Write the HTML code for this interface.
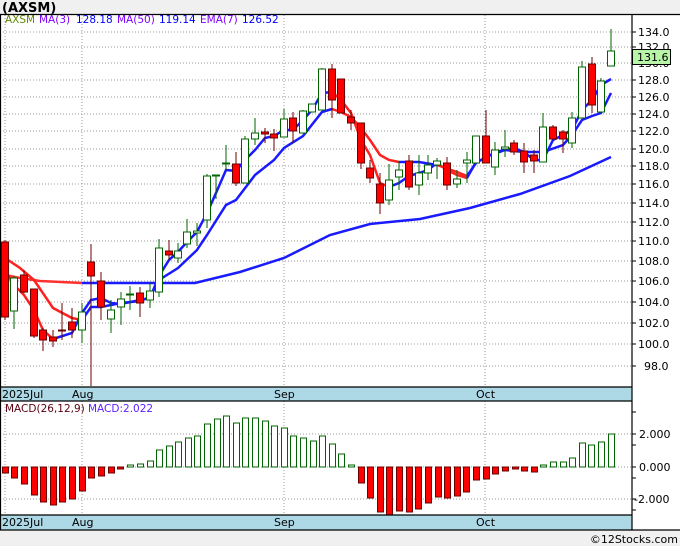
<!DOCTYPE html>
<html><head><meta charset="utf-8"><style>
html,body{margin:0;padding:0;background:#f0f0f0;}
svg{display:block;font-family:"DejaVu Sans","Liberation Sans",sans-serif;}
</style></head><body>
<svg width="680" height="546" viewBox="0 0 680 546" xmlns="http://www.w3.org/2000/svg">
<rect x="0" y="0" width="680" height="546" fill="#f0f0f0"/>
<text x="2" y="12" font-size="13" font-weight="bold" fill="#000">(AXSM)</text>
<rect x="0" y="14" width="680" height="516" fill="#fff"/>
<!-- grids price -->
<g stroke="#999" stroke-dasharray="1,2" stroke-width="1">
<line x1="0" x2="632" y1="32" y2="32"/><line x1="0" x2="632" y1="47" y2="47"/><line x1="0" x2="632" y1="63" y2="63"/><line x1="0" x2="632" y1="80" y2="80"/><line x1="0" x2="632" y1="97" y2="97"/><line x1="0" x2="632" y1="114" y2="114"/><line x1="0" x2="632" y1="131" y2="131"/><line x1="0" x2="632" y1="149" y2="149"/><line x1="0" x2="632" y1="166" y2="166"/><line x1="0" x2="632" y1="184" y2="184"/><line x1="0" x2="632" y1="203" y2="203"/><line x1="0" x2="632" y1="222" y2="222"/><line x1="0" x2="632" y1="241" y2="241"/><line x1="0" x2="632" y1="261" y2="261"/><line x1="0" x2="632" y1="281" y2="281"/><line x1="0" x2="632" y1="302" y2="302"/><line x1="0" x2="632" y1="323" y2="323"/><line x1="0" x2="632" y1="344" y2="344"/><line x1="0" x2="632" y1="366" y2="366"/>
<line x1="5" x2="5" y1="15" y2="387"/><line x1="82" x2="82" y1="15" y2="387"/><line x1="284" x2="284" y1="15" y2="387"/><line x1="485" x2="485" y1="15" y2="387"/>
<line x1="0" x2="632" y1="434" y2="434"/><line x1="0" x2="632" y1="467" y2="467"/><line x1="0" x2="632" y1="499" y2="499"/>
<line x1="5" x2="5" y1="401" y2="515"/><line x1="82" x2="82" y1="401" y2="515"/><line x1="284" x2="284" y1="401" y2="515"/><line x1="485" x2="485" y1="401" y2="515"/>
</g>
<!-- MA50 -->
<polyline fill="none" stroke="#ff3030" stroke-width="2.5" points="5,275 20,278 40,281 82,283"/>
<polyline fill="none" stroke="#1a1aff" stroke-width="2.5" points="82,283 195,283 240,272 284,258 330,235 370,224 420,219 470,208 520,194 570,176 611,157"/>
<!-- EMA7 -->
<polyline fill="none" stroke="#ff2020" stroke-width="2.5" points="5,258 20,268 34,280 53,308 72,318 82,320"/>
<polyline fill="none" stroke="#1a1aff" stroke-width="2.5" points="82,320 91,307 101,307 121,303 140,301 150,297 159,280 178,268 197,250 207,235 226,205 236,200 255,175 274,160 284,148 303,136 322,112 332,109"/>
<polyline fill="none" stroke="#ff2020" stroke-width="2.5" points="332,109 341,112 351,117 361,128 370,140 380,155 389,160 399,162"/>
<polyline fill="none" stroke="#1a1aff" stroke-width="2.5" points="399,162 419,162 437,165"/>
<polyline fill="none" stroke="#ff2020" stroke-width="2.5" points="437,165 457,172 467,176"/>
<polyline fill="none" stroke="#1a1aff" stroke-width="2.5" points="467,176 476,163 486,157 505,150 524,152 543,152 563,145 572,135 582,120 592,116 601,113 611,93"/>
<!-- MA3 -->
<polyline fill="none" stroke="#ff2020" stroke-width="2.5" points="5,270 14,285 24,295 34,310 43,330 53,339"/>
<polyline fill="none" stroke="#1a1aff" stroke-width="2.5" points="53,339 72,333 82,313 91,300 101,298 111,303 121,304 140,300 150,298 159,276 169,260 178,252 187,242 197,232 207,213 216,193 226,170 236,171 245,160 255,150 265,138 274,136 284,130 293,130 303,120 312,110 322,93 332,92"/>
<polyline fill="none" stroke="#ff2020" stroke-width="2.5" points="332,92 341,100 351,113 361,140 370,155 380,183 389,187"/>
<polyline fill="none" stroke="#1a1aff" stroke-width="2.5" points="389,187 399,183 409,176 419,173 428,170 437,163"/>
<polyline fill="none" stroke="#ff2020" stroke-width="2.5" points="437,163 447,170 457,175 467,178"/>
<polyline fill="none" stroke="#1a1aff" stroke-width="2.5" points="467,178 476,162 486,158 495,152 505,150 514,148 524,152 534,160 543,160 553,140 563,135 572,130 582,110 592,100 601,85 611,79"/>
<!-- candles -->
<g stroke-width="1">
<g stroke="#6b0000"><line x1="5" x2="5" y1="240" y2="320"/><line x1="24" x2="24" y1="270" y2="293"/><line x1="34" x2="34" y1="289" y2="338"/><line x1="43" x2="43" y1="328" y2="351"/><line x1="53" x2="53" y1="330" y2="347"/><line x1="62" x2="62" y1="303" y2="340"/><line x1="72" x2="72" y1="308" y2="338"/><line x1="91" x2="91" y1="244" y2="386"/><line x1="101" x2="101" y1="272" y2="320"/><line x1="140" x2="140" y1="287" y2="317"/><line x1="169" x2="169" y1="240" y2="260"/><line x1="236" x2="236" y1="152" y2="186"/><line x1="265" x2="265" y1="128" y2="143"/><line x1="274" x2="274" y1="129" y2="151"/><line x1="293" x2="293" y1="112" y2="143"/><line x1="332" x2="332" y1="64" y2="118"/><line x1="341" x2="341" y1="79" y2="113"/><line x1="351" x2="351" y1="110" y2="130"/><line x1="361" x2="361" y1="123" y2="169"/><line x1="370" x2="370" y1="160" y2="183"/><line x1="380" x2="380" y1="173" y2="214"/><line x1="409" x2="409" y1="155" y2="190"/><line x1="447" x2="447" y1="157" y2="190"/><line x1="486" x2="486" y1="110" y2="163"/><line x1="514" x2="514" y1="140" y2="155"/><line x1="524" x2="524" y1="143" y2="173"/><line x1="534" x2="534" y1="150" y2="173"/><line x1="553" x2="553" y1="125" y2="140"/><line x1="563" x2="563" y1="130" y2="153"/><line x1="592" x2="592" y1="57" y2="113"/></g>
<g stroke="#006400"><line x1="14" x2="14" y1="276" y2="329"/><line x1="82" x2="82" y1="303" y2="343"/><line x1="111" x2="111" y1="300" y2="333"/><line x1="121" x2="121" y1="292" y2="325"/><line x1="130" x2="130" y1="286" y2="310"/><line x1="150" x2="150" y1="283" y2="308"/><line x1="159" x2="159" y1="239" y2="297"/><line x1="178" x2="178" y1="243" y2="263"/><line x1="187" x2="187" y1="219" y2="248"/><line x1="197" x2="197" y1="223" y2="246"/><line x1="207" x2="207" y1="174" y2="228"/><line x1="216" x2="216" y1="175" y2="199"/><line x1="226" x2="226" y1="145" y2="170"/><line x1="245" x2="245" y1="136" y2="183"/><line x1="255" x2="255" y1="118" y2="145"/><line x1="284" x2="284" y1="109" y2="137"/><line x1="303" x2="303" y1="110" y2="133"/><line x1="322" x2="322" y1="68" y2="110"/><line x1="389" x2="389" y1="164" y2="205"/><line x1="399" x2="399" y1="161" y2="190"/><line x1="419" x2="419" y1="155" y2="195"/><line x1="428" x2="428" y1="155" y2="180"/><line x1="437" x2="437" y1="158" y2="179"/><line x1="457" x2="457" y1="170" y2="188"/><line x1="467" x2="467" y1="152" y2="183"/><line x1="495" x2="495" y1="142" y2="175"/><line x1="505" x2="505" y1="130" y2="157"/><line x1="543" x2="543" y1="113" y2="162"/><line x1="572" x2="572" y1="112" y2="148"/><line x1="582" x2="582" y1="61" y2="118"/><line x1="601" x2="601" y1="78" y2="112"/><line x1="611" x2="611" y1="29" y2="66"/></g>
<g fill="#ff0000" stroke="#6b0000">
<rect x="1.5" y="242" width="7" height="75"/><rect x="20.5" y="275" width="7" height="17"/><rect x="30.5" y="289" width="7" height="47"/><rect x="39.5" y="330" width="7" height="10"/><rect x="49.5" y="337" width="7" height="4"/><rect x="58.5" y="330" width="7" height="1"/><rect x="68.5" y="322" width="7" height="8"/><rect x="87.5" y="262" width="7" height="14"/><rect x="97.5" y="281" width="7" height="26"/><rect x="136.5" y="293" width="7" height="10"/><rect x="165.5" y="251" width="7" height="4"/><rect x="232.5" y="164" width="7" height="19"/><rect x="261.5" y="132" width="7" height="2"/><rect x="270.5" y="134" width="7" height="4"/><rect x="289.5" y="118" width="7" height="13"/><rect x="328.5" y="69" width="7" height="31"/><rect x="337.5" y="79" width="7" height="34"/><rect x="347.5" y="117" width="7" height="6"/><rect x="357.5" y="123" width="7" height="40"/><rect x="366.5" y="168" width="7" height="10"/><rect x="376.5" y="184" width="7" height="19"/><rect x="405.5" y="161" width="7" height="26"/><rect x="443.5" y="163" width="7" height="22"/><rect x="482.5" y="136" width="7" height="27"/><rect x="510.5" y="143" width="7" height="9"/><rect x="520.5" y="151" width="7" height="11"/><rect x="530.5" y="155" width="7" height="6"/><rect x="549.5" y="127" width="7" height="12"/><rect x="559.5" y="132" width="7" height="7"/><rect x="588.5" y="64" width="7" height="41"/>
</g>
<g fill="#fff" stroke="#006400">
<rect x="10.5" y="278" width="7" height="33"/><rect x="78.5" y="312" width="7" height="18"/><rect x="107.5" y="310" width="7" height="9"/><rect x="117.5" y="299" width="7" height="8"/><rect x="126.5" y="294" width="7" height="1"/><rect x="146.5" y="291" width="7" height="9"/><rect x="155.5" y="248" width="7" height="44"/><rect x="174.5" y="251" width="7" height="7"/><rect x="183.5" y="232" width="7" height="12"/><rect x="193.5" y="231" width="7" height="2"/><rect x="203.5" y="176" width="7" height="44"/><rect x="212.5" y="175" width="7" height="1"/><rect x="222.5" y="163" width="7" height="1"/><rect x="241.5" y="139" width="7" height="44"/><rect x="251.5" y="133" width="7" height="6"/><rect x="280.5" y="119" width="7" height="18"/><rect x="299.5" y="111" width="7" height="22"/><rect x="308.5" y="104" width="7" height="8"/><rect x="318.5" y="69" width="7" height="41"/><rect x="385.5" y="180" width="7" height="20"/><rect x="395.5" y="170" width="7" height="7"/><rect x="415.5" y="173" width="7" height="12"/><rect x="424.5" y="165" width="7" height="8"/><rect x="433.5" y="161" width="7" height="4"/><rect x="453.5" y="179" width="7" height="5"/><rect x="463.5" y="160" width="7" height="3"/><rect x="472.5" y="136" width="7" height="27"/><rect x="491.5" y="150" width="7" height="17"/><rect x="501.5" y="147" width="7" height="2"/><rect x="539.5" y="127" width="7" height="35"/><rect x="568.5" y="118" width="7" height="25"/><rect x="578.5" y="67" width="7" height="51"/><rect x="597.5" y="81" width="7" height="31"/><rect x="607.5" y="51" width="7" height="15"/>
</g></g>
<!-- legend -->
<text y="23" font-size="10.5"><tspan x="5" fill="#5f8a00">AXSM</tspan><tspan x="39" fill="#8000ff">MA(3)</tspan><tspan x="76" fill="#0000ff">128.18</tspan><tspan x="117" fill="#8000ff">MA(50)</tspan><tspan x="159" fill="#0000ff">119.14</tspan><tspan x="200" fill="#8000ff">EMA(7)</tspan><tspan x="242" fill="#0000ff">126.52</tspan></text>
<!-- MACD bars -->
<g fill="#ff0000" stroke="#6b0000">
<rect x="2.5" y="467" width="6" height="6"/><rect x="11.5" y="467" width="6" height="11"/><rect x="21.5" y="467" width="6" height="17"/><rect x="31.5" y="467" width="6" height="28"/><rect x="40.5" y="467" width="6" height="35"/><rect x="50.5" y="467" width="6" height="38"/><rect x="59.5" y="467" width="6" height="35"/><rect x="69.5" y="467" width="6" height="32"/><rect x="79.5" y="467" width="6" height="24"/><rect x="88.5" y="467" width="6" height="11"/><rect x="98.5" y="467" width="6" height="9"/><rect x="108.5" y="467" width="6" height="6"/><rect x="117.5" y="467" width="6" height="2"/>
<rect x="358.5" y="467" width="6" height="16"/><rect x="367.5" y="467" width="6" height="31"/><rect x="377.5" y="467" width="6" height="45"/><rect x="386.5" y="467" width="6" height="48"/><rect x="396.5" y="467" width="6" height="44"/><rect x="406.5" y="467" width="6" height="45"/><rect x="415.5" y="467" width="6" height="42"/><rect x="425.5" y="467" width="6" height="36"/><rect x="435.5" y="467" width="6" height="30"/><rect x="444.5" y="467" width="6" height="31"/><rect x="454.5" y="467" width="6" height="29"/><rect x="463.5" y="467" width="6" height="25"/><rect x="473.5" y="467" width="6" height="13"/><rect x="483.5" y="467" width="6" height="12"/><rect x="492.5" y="467" width="6" height="7"/><rect x="502.5" y="467" width="6" height="4"/><rect x="512.5" y="467" width="6" height="2"/><rect x="521.5" y="467" width="6" height="4"/><rect x="531.5" y="467" width="6" height="5"/>
</g>
<g fill="#fff" stroke="#006400">
<rect x="127.5" y="465" width="6" height="2"/><rect x="137.5" y="464" width="6" height="3"/><rect x="147.5" y="461" width="6" height="6"/><rect x="156.5" y="450" width="6" height="17"/><rect x="166.5" y="446" width="6" height="21"/><rect x="175.5" y="442" width="6" height="25"/><rect x="185.5" y="438" width="6" height="29"/><rect x="194.5" y="436" width="6" height="31"/><rect x="204.5" y="424" width="6" height="43"/><rect x="214.5" y="419" width="6" height="48"/><rect x="223.5" y="416" width="6" height="51"/><rect x="233.5" y="423" width="6" height="44"/><rect x="242.5" y="418" width="6" height="49"/><rect x="252.5" y="418" width="6" height="49"/><rect x="262.5" y="421" width="6" height="46"/><rect x="271.5" y="426" width="6" height="41"/><rect x="281.5" y="428" width="6" height="39"/><rect x="290.5" y="436" width="6" height="31"/><rect x="300.5" y="438" width="6" height="29"/><rect x="310.5" y="441" width="6" height="26"/><rect x="319.5" y="436" width="6" height="31"/><rect x="329.5" y="444" width="6" height="23"/><rect x="338.5" y="454" width="6" height="13"/><rect x="348.5" y="465" width="6" height="2"/>
<rect x="540.5" y="465" width="6" height="2"/><rect x="550.5" y="462" width="6" height="5"/><rect x="560.5" y="462" width="6" height="5"/><rect x="569.5" y="458" width="6" height="9"/><rect x="579.5" y="443" width="6" height="24"/><rect x="588.5" y="445" width="6" height="22"/><rect x="598.5" y="442" width="6" height="25"/><rect x="608.5" y="434" width="6" height="33"/>
</g>
<text y="412" font-size="10.5"><tspan x="5" fill="#5a0010">MACD(26,12,9)</tspan><tspan x="88" fill="#6020ff">MACD:2.022</tspan></text>
<!-- date bands -->
<rect x="0" y="387" width="632" height="14" fill="#add8e6"/>
<rect x="0" y="515" width="632" height="15" fill="#add8e6"/>
<g stroke="#000" stroke-width="1.2">
<line x1="0" x2="632" y1="387" y2="387"/><line x1="0" x2="632" y1="401" y2="401"/><line x1="0" x2="632" y1="515" y2="515"/><line x1="0" x2="680" y1="530" y2="530"/><line x1="0" x2="680" y1="14.5" y2="14.5"/>
<line x1="632" x2="632" y1="14" y2="530"/><line x1="0.5" x2="0.5" y1="14" y2="530"/>
</g>
<g font-size="11" fill="#000">
<text x="2" y="398">2025Jul</text><text x="72" y="398">Aug</text><text x="274" y="398">Sep</text><text x="476" y="398">Oct</text>
<text x="2" y="526">2025Jul</text><text x="72" y="526">Aug</text><text x="274" y="526">Sep</text><text x="476" y="526">Oct</text>
</g>
<!-- price axis -->
<g stroke="#000"><line x1="632" x2="636" y1="32" y2="32"/><line x1="632" x2="636" y1="47" y2="47"/><line x1="632" x2="636" y1="80" y2="80"/><line x1="632" x2="636" y1="97" y2="97"/><line x1="632" x2="636" y1="114" y2="114"/><line x1="632" x2="636" y1="131" y2="131"/><line x1="632" x2="636" y1="149" y2="149"/><line x1="632" x2="636" y1="166" y2="166"/><line x1="632" x2="636" y1="184" y2="184"/><line x1="632" x2="636" y1="203" y2="203"/><line x1="632" x2="636" y1="222" y2="222"/><line x1="632" x2="636" y1="241" y2="241"/><line x1="632" x2="636" y1="261" y2="261"/><line x1="632" x2="636" y1="281" y2="281"/><line x1="632" x2="636" y1="302" y2="302"/><line x1="632" x2="636" y1="323" y2="323"/><line x1="632" x2="636" y1="344" y2="344"/><line x1="632" x2="636" y1="366" y2="366"/>
<line x1="632" x2="636" y1="412" y2="412"/><line x1="632" x2="636" y1="434" y2="434"/><line x1="632" x2="636" y1="445" y2="445"/><line x1="632" x2="636" y1="467" y2="467"/><line x1="632" x2="636" y1="478" y2="478"/><line x1="632" x2="636" y1="499" y2="499"/><line x1="632" x2="636" y1="510" y2="510"/></g>
<g font-size="11" fill="#000">
<text x="638" y="36">134.0</text><text x="638" y="51">132.0</text><text x="638" y="67">130.0</text><text x="638" y="84">128.0</text><text x="638" y="101">126.0</text><text x="638" y="118">124.0</text><text x="638" y="135">122.0</text><text x="638" y="153">120.0</text><text x="638" y="170">118.0</text><text x="638" y="188">116.0</text><text x="638" y="207">114.0</text><text x="638" y="226">112.0</text><text x="638" y="245">110.0</text><text x="638" y="265">108.0</text><text x="638" y="285">106.0</text><text x="638" y="306">104.0</text><text x="638" y="327">102.0</text><text x="638" y="348">100.0</text><text x="644" y="370">98.0</text>
<text x="639" y="438">2.000</text><text x="639" y="471">0.000</text><text x="634" y="503">-2.000</text>
</g>
<rect x="632.5" y="49.5" width="38" height="15" fill="#b8f5a8" stroke="#000"/>
<text x="637" y="61" font-size="11" fill="#000">131.6</text>
<text x="678" y="543" font-size="11" fill="#000" text-anchor="end">©12Stocks.com</text>
</svg>
</body></html>
